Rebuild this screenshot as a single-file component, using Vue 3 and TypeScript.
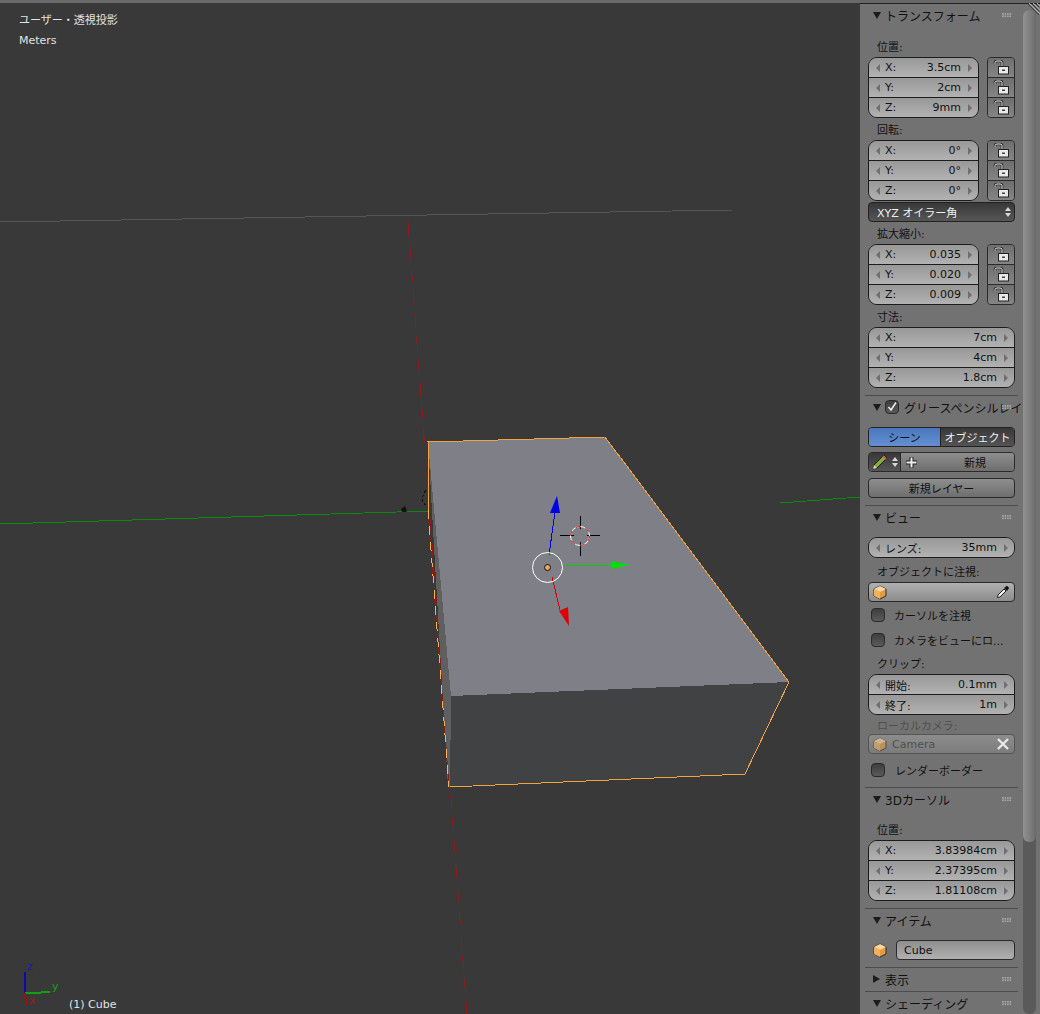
<template>
  <div class="app">
    <div class="view">
      <svg class="scene" width="860" height="1014" viewBox="0 0 860 1014">
        <g shape-rendering="crispEdges" fill="none">
          <line x1="0" y1="222" x2="733" y2="210" stroke="#555" />
          <line x1="0" y1="524" x2="430" y2="511" stroke="#0c8a0c" />
          <line x1="780" y1="503" x2="860" y2="497" stroke="#0c8a0c" />
          <line x1="408" y1="222" x2="467" y2="1014" stroke="#8e1b1b" stroke-dasharray="14 9" />
          <polygon points="428,442 605,437 789,682 451,696" fill="#7f7f87" />
          <polygon points="428,442 451,696 450,787 448,787" fill="#5f5f5f" />
          <polygon points="451,696 789,682 745,774 450,787" fill="#414244" />
          <polyline points="428,510 428,442 605,437 789,682 745,774 450,787" stroke="#f5a23c" />
          <line x1="428" y1="510" x2="449" y2="787" stroke="#f5b050" stroke-dasharray="9 7" />
          <line x1="428" y1="510" x2="449" y2="787" stroke="#8e1b1b" stroke-dasharray="6 10" stroke-dashoffset="-9" />
          <path d="M426 490 Q421 497 423 503 L426 505" stroke="#111" stroke-dasharray="3 2" />
        </g>
        <path d="M401 509 L405 506 L407 512 L402 512 Z" fill="#111" />
        <g fill="none" shape-rendering="crispEdges">
          <line x1="549" y1="555" x2="555" y2="512" stroke="#0000e6" />
          <line x1="564" y1="566" x2="612" y2="565" stroke="#00d000" />
          <line x1="552" y1="577" x2="560" y2="610" stroke="#d80000" />
          <line x1="560" y1="529" x2="574" y2="535" stroke="none" />
          <line x1="560" y1="535.5" x2="574" y2="535.5" stroke="#000" />
          <line x1="587" y1="535.5" x2="600" y2="535.5" stroke="#000" />
          <line x1="580.5" y1="516" x2="580.5" y2="529" stroke="#000" />
          <line x1="580.5" y1="542" x2="580.5" y2="556" stroke="#000" />
        </g>
        <polygon points="557,496 550,513 560,513" fill="#0000e6" />
        <polygon points="611,561 630,565 611,569" fill="#00e000" />
        <polygon points="559,611 568,607 569,626" fill="#e00000" />
        <circle cx="580" cy="536" r="9.5" fill="none" stroke="#fff" />
        <circle cx="580" cy="536" r="9.5" fill="none" stroke="#d01818" stroke-dasharray="5 5" />
        <circle cx="547.5" cy="567.5" r="15" fill="none" stroke="#fff" />
        <circle cx="547.5" cy="567.5" r="3" fill="#e8a860" stroke="#111" />
        <g fill="none" shape-rendering="crispEdges" stroke-width="2">
          <line x1="25" y1="972" x2="25" y2="993" stroke="#0a0ab0" />
          <line x1="25" y1="993" x2="41" y2="993" stroke="#10a010" />
          <line x1="41" y1="992" x2="50" y2="992" stroke="#10a010" />
          <line x1="25" y1="993" x2="26" y2="1005" stroke="#a01010" />
        </g>
        <text x="27" y="970" class="axis" fill="#1a1ab8">z</text>
        <text x="52" y="990" class="axis" fill="#14a014">y</text>
        <text x="29" y="1004" class="axis" fill="#a81818">x</text>
      </svg>
      <div class="overlay top">
        <div class="mode">ユーザー・透視投影</div>
        <div class="units">Meters</div>
      </div>
      <div class="overlay name">(1) Cube</div>
    </div>

    <aside class="panel">
      <div class="content">
        <section v-for="s in sections" :key="s.title" class="sect" :class="s.cls">
          <header class="head">
            <span class="tri" :class="{ closed: s.closed }"></span>
            <span v-if="s.check" class="check head-check on">
              <svg width="12" height="12" viewBox="0 0 12 12"><path d="M2.5 6 L5 9 L10 1.5" fill="none" stroke="#eee" stroke-width="1.6" /></svg>
            </span>
            <span class="head-title">{{ s.title }}</span>
            <span class="grip"></span>
          </header>

          <template v-for="(b, i) in s.blocks" :key="i">
            <div v-if="b.kind === 'label'" class="label" :class="[b.cls, { dim: b.dim }]">{{ b.text }}</div>

            <div v-else-if="b.kind === 'nums'" class="num-line">
              <div class="nums">
                <div v-for="r in b.rows" :key="r[0]" class="num">
                  <span class="arr left"></span>
                  <span class="key">{{ r[0] }}</span>
                  <span class="val">{{ r[1] }}</span>
                  <span class="arr right"></span>
                </div>
              </div>
              <div v-if="b.lock" class="locks">
                <div v-for="r in b.rows" :key="r[0]" class="lock">
                  <svg width="16" height="15" viewBox="0 0 16 15">
                    <path d="M2 4 V2.5 Q2 1 4 1 H7 Q9 1 9 2.5 V6" fill="none" stroke="#222" stroke-width="2.6" />
                    <path d="M2 4 V2.5 Q2 1 4 1 H7 Q9 1 9 2.5 V6" fill="none" stroke="#eee" stroke-width="1" />
                    <rect x="5.5" y="6.5" width="10" height="7.5" fill="#e8e8e8" stroke="#222" />
                    <rect x="9" y="9.5" width="3" height="1.5" fill="#444" />
                  </svg>
                </div>
              </div>
            </div>

            <div v-else-if="b.kind === 'select'" class="select">
              <span>{{ b.text }}</span>
              <span class="updown"><i class="up"></i><i class="down"></i></span>
            </div>

            <div v-else-if="b.kind === 'tabs'" class="tabs">
              <span class="tab sel">シーン</span>
              <span class="tab">オブジェクト</span>
            </div>

            <div v-else-if="b.kind === 'pencil'" class="pencil-row">
              <span class="pencil-pick">
                <svg width="18" height="18" viewBox="0 0 18 18">
                  <path d="M2 16 L3 12 L13 2 L16 5 L6 15 Z" fill="#7fae3a" stroke="#1c1c1c" />
                  <path d="M2 16 L3 12 L6 15 Z" fill="#ecd2a0" />
                  <path d="M12 3 L15 6" stroke="#d55" stroke-width="2" />
                </svg>
                <span class="updown"><i class="up"></i><i class="down"></i></span>
              </span>
              <span class="pencil-new">
                <svg class="plus" width="13" height="13" viewBox="0 0 13 13"><path d="M6.5 1 V12 M1 6.5 H12" stroke="#222" stroke-width="4" /><path d="M6.5 1.5 V11.5 M1.5 6.5 H11.5" stroke="#eee" stroke-width="2" /></svg>
                <span class="new-text">新規</span>
              </span>
            </div>

            <div v-else-if="b.kind === 'button'" class="btn">{{ b.text }}</div>

            <div v-else-if="b.kind === 'checkbox'" class="check-line" :class="b.cls">
              <span class="check"></span>
              <span>{{ b.text }}</span>
            </div>

            <div v-else-if="b.kind === 'object'" class="obj" :class="{ faded: b.faded }">
              <svg class="cube" width="14" height="15" viewBox="0 0 14 15">
                <path d="M7 1 L13 4 V11 L7 14 L1 11 V4 Z" fill="#e69a3c" stroke="#2a2a2a" />
                <path d="M7 1 L13 4 L7 7 L1 4 Z" fill="#f6d6a6" />
                <path d="M7 7 V14 L1 11 V4 Z" fill="#f0b060" />
              </svg>
              <span class="obj-text">{{ b.text }}</span>
              <svg v-if="b.picker" class="obj-end" width="14" height="14" viewBox="0 0 14 14">
                <path d="M1.5 12.5 L2 10 L8 4 L10 6 L4 12 Z" fill="#eee" stroke="#222" />
                <path d="M8 3 L11 0.8 L13.2 3 L11 6 Z" fill="#111" />
              </svg>
              <svg v-if="b.clear" class="obj-end" width="14" height="14" viewBox="0 0 14 14">
                <path d="M2 2 L12 12 M12 2 L2 12" stroke="#e8e8e8" stroke-width="2.4" />
              </svg>
            </div>

            <div v-else-if="b.kind === 'item'" class="item">
              <svg width="14" height="15" viewBox="0 0 14 15">
                <path d="M7 1 L13 4 V11 L7 14 L1 11 V4 Z" fill="#e69a3c" stroke="#2a2a2a" />
                <path d="M7 1 L13 4 L7 7 L1 4 Z" fill="#f6d6a6" />
                <path d="M7 7 V14 L1 11 V4 Z" fill="#f0b060" />
              </svg>
              <span class="item-field">{{ b.text }}</span>
            </div>
          </template>
        </section>
      </div>

      <div class="scroll">
        <div class="thumb"></div>
      </div>
      <svg class="corner" width="12" height="12" viewBox="0 0 12 12">
        <path d="M1 0 L12 11 M5 0 L12 7 M9 0 L12 3" stroke="#b4b4b4" />
        <path d="M0 1 L11 12 M4 1 L11 8 M8 1 L11 4" stroke="#3c3c3c" />
      </svg>
    </aside>
  </div>
</template>

<script setup lang="ts">
interface Block {
  kind: string;
  text?: string;
  cls?: string;
  dim?: boolean;
  lock?: boolean;
  faded?: boolean;
  picker?: boolean;
  clear?: boolean;
  rows?: string[][];
}

interface Section {
  title: string;
  cls: string;
  closed?: boolean;
  check?: boolean;
  blocks: Block[];
}

const xyz = (x: string, y: string, z: string) => [
  ['X:', x],
  ['Y:', y],
  ['Z:', z],
];

const sections: Section[] = [
  {
    title: 'トランスフォーム',
    cls: 'first',
    blocks: [
      { kind: 'label', text: '位置:' },
      { kind: 'nums', lock: true, rows: xyz('3.5cm', '2cm', '9mm') },
      { kind: 'label', text: '回転:' },
      { kind: 'nums', lock: true, rows: xyz('0°', '0°', '0°') },
      { kind: 'select', text: 'XYZ オイラー角' },
      { kind: 'label', text: '拡大縮小:' },
      { kind: 'nums', lock: true, rows: xyz('0.035', '0.020', '0.009') },
      { kind: 'label', text: '寸法:' },
      { kind: 'nums', rows: xyz('7cm', '4cm', '1.8cm') },
    ],
  },
  {
    title: 'グリースペンシルレイヤー',
    cls: 'grease',
    check: true,
    blocks: [
      { kind: 'tabs' },
      { kind: 'pencil' },
      { kind: 'button', text: '新規レイヤー' },
    ],
  },
  {
    title: 'ビュー',
    cls: 'view-sect',
    blocks: [
      { kind: 'nums', rows: [['レンズ:', '35mm']] },
      { kind: 'label', cls: 'tall', text: 'オブジェクトに注視:' },
      { kind: 'object', picker: true },
      { kind: 'checkbox', text: 'カーソルを注視' },
      { kind: 'checkbox', text: 'カメラをビューにロ...' },
      { kind: 'label', text: 'クリップ:' },
      { kind: 'nums', rows: [['開始:', '0.1mm'], ['終了:', '1m']] },
      { kind: 'label', cls: 'short', dim: true, text: 'ローカルカメラ:' },
      { kind: 'object', faded: true, clear: true, text: 'Camera' },
      { kind: 'checkbox', cls: 'render', text: 'レンダーボーダー' },
    ],
  },
  {
    title: '3Dカーソル',
    cls: 'cursor',
    blocks: [
      { kind: 'label', text: '位置:' },
      { kind: 'nums', rows: xyz('3.83984cm', '2.37395cm', '1.81108cm') },
    ],
  },
  {
    title: 'アイテム',
    cls: 'normal',
    blocks: [{ kind: 'item', text: 'Cube' }],
  },
  { title: '表示', cls: 'collapsed', closed: true, blocks: [] },
  { title: 'シェーディング', cls: 'collapsed', blocks: [] },
];
</script>

<style>
html,
body {
  margin: 0;
  background: #393939;
}
</style>

<style scoped>
.app {
  display: flex;
  width: 1040px;
  height: 1014px;
  overflow: hidden;
  font-family: "DejaVu Sans", "Noto Sans CJK JP", sans-serif;
  font-size: 11px;
  color: #111;
}

.view {
  position: relative;
  flex: 0 0 860px;
  height: 1014px;
  background: #393939;
  border-top: 3px solid #6a6a6a;
  box-sizing: border-box;
}

.scene {
  position: absolute;
  left: 0;
  top: -3px;
}

.axis {
  font-size: 11px;
}

.overlay {
  position: absolute;
  color: #e2e2e2;
  white-space: nowrap;
}

.top {
  left: 19px;
  top: 8px;
}

.mode {
  height: 20px;
  line-height: 20px;
}

.units {
  height: 20px;
  line-height: 20px;
}

.name {
  left: 69px;
  top: 994px;
  line-height: 16px;
}

.panel {
  position: relative;
  display: flex;
  flex: 0 0 180px;
  height: 1014px;
  box-sizing: border-box;
  background: #727272;
  border-top: 3px solid #666;
}

.panel::before {
  content: "";
  position: absolute;
  left: 0;
  right: 0;
  top: 0;
  height: 1px;
  background: #222;
}

.content {
  flex: 0 0 163px;
  height: 1011px;
  overflow: hidden;
  box-sizing: border-box;
  padding-top: 1px;
}

.sect {
  margin: 0 5px;
  padding: 0 3px 7px;
  border-top: 1px solid #4c4c4c;
}

.sect.first {
  border-top: 0;
}

.sect.collapsed {
  padding-bottom: 1px;
}

.sect.view-sect {
  padding-bottom: 5px;
}

.head {
  position: relative;
  display: flex;
  align-items: center;
  height: 22px;
  margin-bottom: 9px;
  font-size: 12px;
  color: #111;
  white-space: nowrap;
}

.sect.cursor .head {
  margin-bottom: 8px;
}

.sect.collapsed .head {
  margin-bottom: 0;
}

.tri {
  width: 0;
  height: 0;
  margin-left: 5px;
  margin-right: 4px;
  border-left: 4px solid transparent;
  border-right: 4px solid transparent;
  border-top: 7px solid #1c1c1c;
}

.tri.closed {
  margin-right: 5px;
  border-top: 4px solid transparent;
  border-bottom: 4px solid transparent;
  border-left: 7px solid #1c1c1c;
  border-right: 0;
}

.head-title {
  flex: none;
}

.head-check {
  margin-right: 5px;
}

.grip {
  position: absolute;
  right: 3px;
  top: 9px;
  width: 10px;
  height: 5px;
  background-image: radial-gradient(circle at 1px 1px, #a8a8a8 0.8px, transparent 1px);
  background-size: 2.5px 2.5px;
}

.sect.grease .head {
  overflow: visible;
}

.label {
  display: flex;
  align-items: flex-end;
  height: 22px;
  padding: 0 0 3px 9px;
  box-sizing: border-box;
  color: #111;
}

.label.tall {
  height: 24px;
}

.label.short {
  height: 19px;
  padding-bottom: 1px;
}

.label.dim {
  color: #4f4f4f;
}

.num-line {
  display: flex;
  gap: 8px;
}

.nums {
  flex: 1;
  border: 1px solid #1c1c1c;
  border-radius: 9px;
  overflow: hidden;
}

.num {
  display: flex;
  align-items: center;
  height: 19px;
  padding: 0 6px 0 7px;
  background: linear-gradient(#989898, #b2b2b2);
}

.num + .num {
  border-top: 1px solid #1c1c1c;
}

.arr {
  width: 0;
  height: 0;
  border-top: 4px solid transparent;
  border-bottom: 4px solid transparent;
}

.arr.left {
  border-right: 4px solid #6f6f6f;
}

.arr.right {
  border-left: 4px solid #6f6f6f;
}

.key {
  margin-left: 5px;
}

.val {
  margin-left: auto;
  margin-right: 7px;
}

.locks {
  flex: 0 0 28px;
  border: 1px solid #2a2a2a;
  border-radius: 4px;
  overflow: hidden;
  box-sizing: border-box;
}

.lock {
  display: flex;
  align-items: center;
  justify-content: center;
  height: 19px;
  background: linear-gradient(#6e6e6e, #858585);
}

.lock + .lock {
  border-top: 1px solid #2a2a2a;
}

.select {
  display: flex;
  align-items: center;
  justify-content: space-between;
  height: 20px;
  margin-top: 1px;
  padding: 0 3px 0 8px;
  box-sizing: border-box;
  border-radius: 4px;
  border: 1px solid #222;
  background: linear-gradient(#383838, #565656);
  color: #f0f0f0;
}

.updown {
  display: inline-flex;
  flex-direction: column;
  gap: 2px;
}

.updown i {
  display: block;
  width: 0;
  height: 0;
  border-left: 3px solid transparent;
  border-right: 3px solid transparent;
}

.updown .up {
  border-bottom: 4px solid #d8d8d8;
}

.updown .down {
  border-top: 4px solid #d8d8d8;
}

.tabs {
  display: flex;
  height: 20px;
  border: 1px solid #222;
  border-radius: 4px;
  overflow: hidden;
  box-sizing: border-box;
}

.tab {
  display: flex;
  align-items: center;
  justify-content: center;
  flex: 1;
  background: linear-gradient(#383838, #545454);
  color: #f0f0f0;
}

.tab.sel {
  flex: 0 0 71px;
  background: linear-gradient(#4a76bc, #6390d2);
  color: #111;
  border-right: 1px solid #222;
}

.pencil-row {
  display: flex;
  height: 20px;
  margin-top: 5px;
  border: 1px solid #2a2a2a;
  border-radius: 4px;
  overflow: hidden;
  box-sizing: border-box;
}

.pencil-pick {
  display: flex;
  align-items: center;
  justify-content: center;
  gap: 3px;
  flex: 0 0 31px;
  background: linear-gradient(#383838, #565656);
  border-right: 1px solid #2a2a2a;
}

.pencil-new {
  position: relative;
  display: flex;
  align-items: center;
  flex: 1;
  padding-left: 4px;
  background: linear-gradient(#8e8e8e, #6e6e6e);
}

.new-text {
  margin-left: 42px;
  margin-right: auto;
  padding-left: 4px;
}

.btn {
  display: flex;
  align-items: center;
  justify-content: center;
  height: 20px;
  margin-top: 6px;
  box-sizing: border-box;
  border: 1px solid #2a2a2a;
  border-radius: 4px;
  background: linear-gradient(#8e8e8e, #6e6e6e);
}

.check-line {
  display: flex;
  align-items: center;
  gap: 9px;
  height: 25px;
  padding-left: 3px;
  color: #111;
}

.check-line.render {
  height: 25px;
  margin-top: 3px;
  gap: 10px;
}

.check {
  display: inline-flex;
  align-items: center;
  justify-content: center;
  flex: none;
  width: 14px;
  height: 14px;
  box-sizing: border-box;
  border: 1px solid #2a2a2a;
  border-radius: 4px;
  background: linear-gradient(#3e3e3e, #5a5a5a);
}

.obj {
  display: flex;
  align-items: center;
  height: 20px;
  padding: 0 4px;
  box-sizing: border-box;
  border: 1px solid #2a2a2a;
  border-radius: 4px;
  background: linear-gradient(#b0b0b0, #8c8c8c);
}

.obj-text {
  margin-left: 5px;
}

.obj-end {
  margin-left: auto;
}

.obj.faded {
  border-color: #555;
  background: linear-gradient(#8c8c8c, #7c7c7c);
  color: #4f4f4f;
}

.obj.faded .cube {
  opacity: 0.6;
}

.item {
  display: flex;
  align-items: center;
  height: 20px;
  padding-left: 5px;
  gap: 9px;
}

.item-field {
  display: flex;
  align-items: center;
  flex: 1;
  height: 20px;
  padding-left: 7px;
  box-sizing: border-box;
  border: 1px solid #2a2a2a;
  border-radius: 4px;
  background: linear-gradient(#8e8e8e, #b0b0b0);
}

.scroll {
  position: relative;
  flex: 0 0 13px;
  height: 1004px;
  margin-top: 7px;
  border-radius: 6px;
  background: #5a5a5a;
}

.thumb {
  height: 832px;
  border-radius: 6px;
  background: linear-gradient(90deg, #919191, #7c7c7c 60%, #6a6a6a);
}

.corner {
  position: absolute;
  right: 0;
  top: 0;
}
</style>
